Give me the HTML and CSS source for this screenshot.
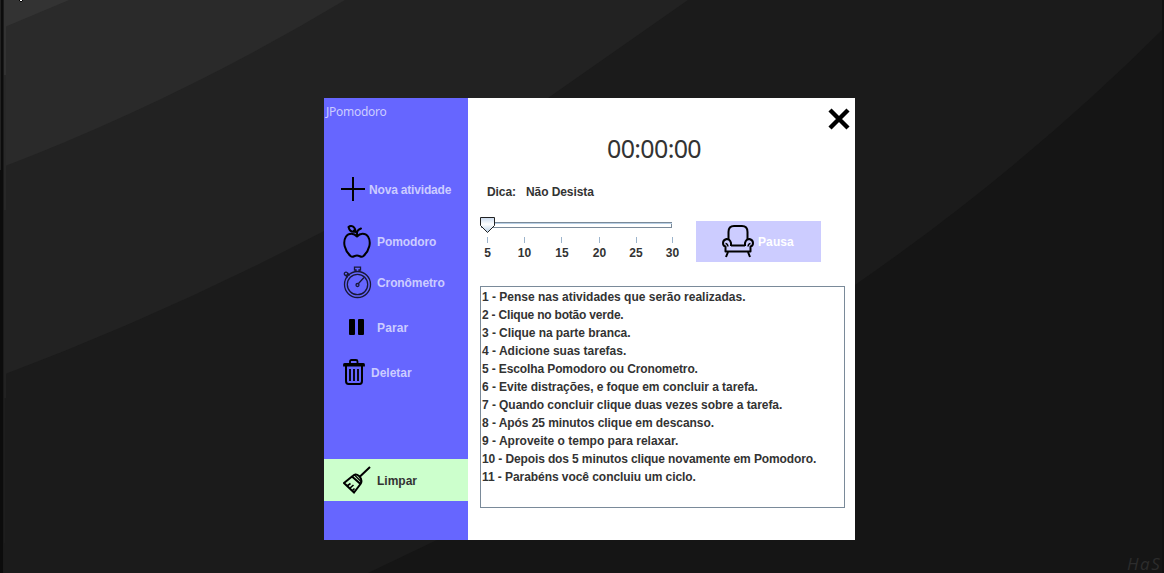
FILE: index.html
```html
<!DOCTYPE html>
<html lang="pt-BR">
<head>
<meta charset="utf-8">
<title>JPomodoro</title>
<link rel="stylesheet" href="styles.css">
</head>
<body>
<svg class="wallpaper" width="1164" height="573" viewBox="0 0 1164 573" aria-hidden="true">
  <rect width="1164" height="573" fill="#151515"/>
  <path fill="#1b1b1b" d="M0 0H1164V28Q1025 167 855 285Q640 437 437 540L368 573H0Z"/>
  <path fill="#222" d="M0 0H688L548 98Q440 172 324 231Q165 314 0 376Z"/>
  <path fill="#2a2a2a" d="M0 0H345Q180 99 0 168Z"/>
  <path fill="#333" d="M0 0H69L0 29Z"/>
  <path fill="#0c0c0c" d="M0 0H3V573H0Z"/>
  <path fill="#222" d="M0 0H1V170H0Z"/>
  <path fill="#1a1a1a" d="M3 0H4V573H3Z"/>
  <path fill="#333" d="M4 0H6V75H4Z"/>
  <path fill="#282828" d="M4 75H6V210H4Z"/>
  <path fill="#222" d="M4 210H6V398H4Z"/>
  <path fill="#1e1e1e" d="M4 398H5V543H4Z"/>
  <path fill="#111" d="M1162 0H1164V573H1162Z"/>
  <path fill="#000" d="M19 0H23V1H22V2H20V1H19Z"/>
  <path fill="#fff" d="M20 0H22V1H20Z"/>
</svg>
<span class="signature">HaS</span>
<main class="window">
  <aside class="sidebar">
    <div class="app-title">JPomodoro</div>
    <button class="item item-new">
      <svg width="24" height="24" viewBox="0 0 24 24"><path d="M12 0V24M0 12H24" stroke="#000" stroke-width="2"/></svg>
      <span>Nova atividade</span>
    </button>
    <button class="item item-pomodoro">
      <svg width="30" height="34" viewBox="0 0 30 34" fill="none" stroke="#000" stroke-width="2" stroke-linejoin="round" stroke-linecap="round"><path d="M14 11.500C11 8 6 7.500 3 11.500C-.5 17 1.500 25.500 7.500 31C10 33 11 30.500 14 30.500C17 30.500 18 33 20.500 31C26.500 25.500 28.500 17 25 11.500C22 7.500 17 8 14 11.500Z"/><path d="M14 11V8C14 6 15.500 4.500 18 3.500M14 8L11 5.500M5.500 2C8 0 12 1 12.500 6.500C8.500 7.500 6.500 6 5.500 2Z"/></svg>
      <span>Pomodoro</span>
    </button>
    <button class="item item-timer">
      <svg width="30" height="34" viewBox="0 0 30 34" fill="none" stroke="#181838" stroke-width="1.300"><circle cx="14.500" cy="18.500" r="13"/><circle cx="14.500" cy="18.500" r="10.200"/><circle cx="14.500" cy="19" r="1.500"/><path d="M15.500 17.500L21 11.500M13 5.500V4H11.500V1.200H17.500V4H16V5.500M4.500 11.500L2.500 9M6.500 9.500L4.500 7"/><circle cx="3" cy="7.800" r="1.700"/></svg>
      <span>Cronômetro</span>
    </button>
    <button class="item item-stop">
      <svg width="16" height="16" viewBox="0 0 16 16"><path d="M1 0H5Q6 0 6 1V15Q6 16 5 16H1Q0 16 0 15V1Q0 0 1 0ZM10 0H14Q15 0 15 1V15Q15 16 14 16H10Q9 16 9 15V1Q9 0 10 0Z"/></svg>
      <span>Parar</span>
    </button>
    <button class="item item-delete">
      <svg width="22" height="26" viewBox="0 0 22 26" fill="none" stroke="#000"><path d="M7 4V2.500Q7 1 8.500 1H13Q14.500 1 14.500 2.500V4" stroke-width="1.800"/><path d="M1 6.500V5.500Q1 5 2 5H20Q21 5 21 5.500V6.500Z" fill="#000" stroke-width="1.800"/><path d="M3 7V22Q3 25 5.500 25H16.500Q19 25 19 22V7" stroke-width="2"/><path d="M7 10V22M11 10V22M15 10V22" stroke-width="1.800"/></svg>
      <span>Deletar</span>
    </button>
    <button class="item item-clear">
      <svg width="28" height="28" viewBox="0 0 28 28" fill="none" stroke="#000" stroke-width="2"><path d="M27 1L17 10.500M9 11Q12 6.500 16 10Q20 14 17.500 18M1 17L9 10.500L17.500 18L11 26.500Z"/><path d="M11 8.500L18.500 16" stroke-width="1.300"/><path d="M4 20L7.500 17.500M6.500 22.500L10.500 19M9 25L11.500 22.500" stroke-width="1.600"/></svg>
      <span>Limpar</span>
    </button>
  </aside>
  <section class="content">
    <button class="close" aria-label="Fechar"><svg width="22" height="22" viewBox="0 0 22 22"><path d="M2 2L20 20M20 2L2 20" stroke="#000" stroke-width="4.400"/></svg></button>
    <div class="clock">00:00:00</div>
    <div class="tip"><span>Dica:</span><span>Não Desista</span></div>
    <div class="controls">
      <div class="slider">
        <svg width="193" height="27" viewBox="0 0 193 27" shape-rendering="crispEdges">
          <defs><linearGradient id="thumb" x2="0" y2="1"><stop stop-color="#c8d9ed"/><stop offset=".45" stop-color="#fff"/><stop offset="1" stop-color="#b8cfe5"/></linearGradient></defs>
          <path d="M1 5H192V11H1Z" fill="#7a8a99"/><path d="M1 6H192V7H1Z" fill="#b8cfe5"/><path d="M1 7H191V10H1Z" fill="#fff"/>
          <path d="M.5 .5H14.500V8.500L7.500 15.500L.5 8.500Z" fill="url(#thumb)" stroke="#222" shape-rendering="auto"/>
          <path d="M7.500 20V26M44.500 20V26M81.500 20V26M119.500 20V26M156.500 20V26M192.500 20V26" stroke="#9cb4cc"/>
        </svg>
        <div class="ticks"><span>5</span><span>10</span><span>15</span><span>20</span><span>25</span><span>30</span></div>
      </div>
      <button class="pause">
        <svg width="32" height="33" viewBox="0 0 32 33" fill="none" stroke="#000" stroke-width="2" stroke-linejoin="round"><path d="M6.500 15V7Q6.500 1 12 1H20Q25.500 1 25.500 7V15M9 20.500H23"/><path d="M9 21V18Q8 14 4.500 14Q1 15 1 18Q1 21 3.500 21.500V26.500H28.500V21.500Q31 21 31 18Q31 15 27.500 14Q24 14 23 18V21"/><path d="M3.500 18.500Q5.500 18.500 6 21.500M28.500 18.500Q26.500 18.500 26 21.500" stroke-width="1.500"/><path d="M6 27L4 32M26 27L28 32"/></svg>
        <span>Pausa</span>
      </button>
    </div>
    <div class="steps">
      <div>1 - Pense nas atividades que serão realizadas.</div>
      <div class="tightest">2 - Clique no botão verde.</div>
      <div class="snug">3 - Clique na parte branca.</div>
      <div>4 - Adicione suas tarefas.</div>
      <div class="tight">5 - Escolha Pomodoro ou Cronometro.</div>
      <div class="snug">6 - Evite distrações, e foque em concluir a tarefa.</div>
      <div class="snug">7 - Quando concluir clique duas vezes sobre a tarefa.</div>
      <div class="snug">8 - Após 25 minutos clique em descanso.</div>
      <div>9 - Aproveite o tempo para relaxar.</div>
      <div class="tight">10 - Depois dos 5 minutos clique novamente em Pomodoro.</div>
      <div class="snug">11 - Parabéns você concluiu um ciclo.</div>
    </div>
  </section>
</main>
</body>
</html>
```
FILE: styles.css
```css
* { box-sizing: border-box; }
body {
  margin: 0;
  height: 573px;
  overflow: hidden;
  background: #151515;
  font: bold 12px/18px "Liberation Sans", Arial, sans-serif;
  color: #333;
}
button {
  border: 0;
  padding: 0;
  background: none;
  font: inherit;
  color: inherit;
}
svg { display: block; flex: none; }
.wallpaper { position: absolute; left: 0; top: 0; }
.signature {
  position: absolute;
  left: 1127px;
  top: 555px;
  font: italic 17px/18px "Open Sans", sans-serif;
  letter-spacing: 1.5px;
  color: #2c2c2c;
}
.window {
  position: absolute;
  left: 324px;
  top: 98px;
  width: 531px;
  height: 442px;
  display: flex;
  background: #fff;
}
.sidebar {
  width: 144px;
  background: #66f;
  color: #ccf;
}
.app-title {
  height: 70px;
  padding: 5px 0 0 2px;
  font: 12px/18px "Noto Sans", sans-serif;
  letter-spacing: -.28px;
}
.item {
  display: flex;
  align-items: center;
  width: 100%;
  height: 42px;
  padding-left: 19px;
  gap: 4px;
  white-space: nowrap;
}
.item-new { padding-left: 17px; letter-spacing: -.18px; }
.item-new span, .item-stop span, .item-delete span, .item-clear span { padding-top: 2px; }
.item-pomodoro { margin-top: 11px; letter-spacing: -.1px; }
.item-timer { height: 40px; letter-spacing: -.1px; }
.item-stop { height: 48px; padding-left: 25px; gap: 12px; letter-spacing: .15px; }
.item-delete { height: 42px; gap: 6px; }
.item-clear { margin-top: 66px; gap: 6px; background: #cfc; color: #333; }
.content {
  flex: 1;
  display: flex;
  flex-direction: column;
  padding: 10px 0 0 12px;
}
.close { align-self: flex-end; margin-right: 5px; }
.clock {
  height: 38px;
  padding-left: 127px;
  font: 25px/36px "Noto Sans", sans-serif;
  letter-spacing: -.65px;
}
.tip { display: flex; gap: 10px; height: 18px; margin-top: 15px; padding-left: 7px; letter-spacing: -.08px; }
.controls { display: flex; height: 54px; margin-top: 15px; }
.slider { width: 216px; padding-top: 1px; }
.ticks {
  display: grid;
  grid-template-columns: 37px 37px 38px 37px 36px 37px;
  width: 222px;
  margin: 0 0 0 -11px;
  text-align: center;
}
.pause {
  display: flex;
  align-items: center;
  gap: 4px;
  width: 125px;
  height: 41px;
  margin-top: 5px;
  padding-left: 26px;
  background: #ccf;
  color: #fff;
  letter-spacing: .1px;
}
.steps {
  width: 365px;
  height: 222px;
  margin-top: 16px;
  padding: 1px;
  border: 1px solid #7a8a99;
  white-space: nowrap;
}
.snug { letter-spacing: -.06px; }
.tight { letter-spacing: -.12px; }
.tightest { letter-spacing: -.2px; }
```
